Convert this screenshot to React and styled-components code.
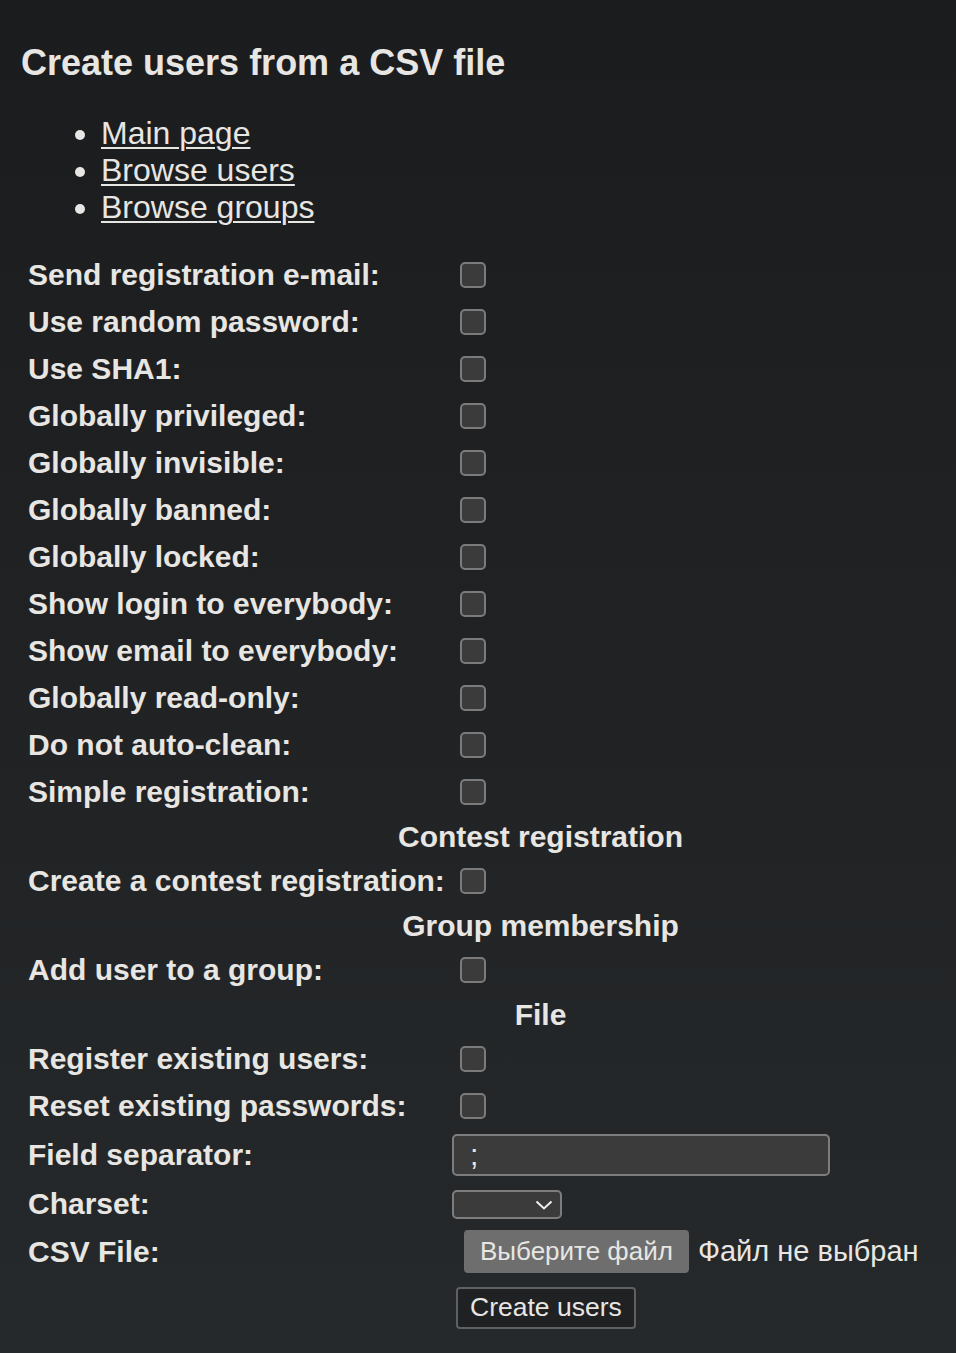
import React from "react";
import styled, { createGlobalStyle } from "styled-components";

const Global = createGlobalStyle`
  html, body { margin: 0; padding: 0; }
  body {
    background: #1b1c1e;
    font-family: "Liberation Sans", Arial, sans-serif;
    color: #e8e6e3;
  }
`;

const Page = styled.div`
  min-height: 100vh;
  overflow: hidden;
  box-sizing: border-box;
  padding: 42px 0 0 21px;
  background: linear-gradient(to bottom, #1b1c1e 0%, #202224 50%, #26292b 100%);
`;

const Title = styled.h1`
  margin: 0;
  font-size: 36px;
  line-height: 42px;
  font-weight: bold;
  white-space: nowrap;
`;

const NavList = styled.ul`
  margin: 31px 0 0 0;
  padding: 0 0 0 80px;
  font-size: 32px;
  line-height: 37px;
  list-style: disc;
`;

const NavLink = styled.a`
  color: #e8e6e3;
  text-decoration: underline;
  text-decoration-thickness: 2px;
  text-underline-offset: 3px;
`;

const Form = styled.form`
  margin: 25.5px 0 0 7px;
  width: 1025px;
`;

const Row = styled.div`
  display: grid;
  grid-template-columns: 424px 601px;
  height: ${(p) => p.$h || 47}px;
  align-items: center;
`;

const Label = styled.label`
  font-size: 30px;
  font-weight: bold;
  white-space: nowrap;
  line-height: 34px;
`;

const Cell = styled.div`
  display: flex;
  align-items: center;
`;

const SectionHeader = styled.div`
  height: 42px;
  display: flex;
  align-items: center;
  justify-content: center;
  font-size: 30px;
  font-weight: bold;
  line-height: 34px;
`;

const Check = styled.input.attrs({ type: "checkbox" })`
  appearance: none;
  margin: 0 0 0 8px;
  width: 26px;
  height: 26px;
  box-sizing: border-box;
  border: 2px solid #7b7b7b;
  border-radius: 5px;
  background: #3b3b3b;
`;

const TextInput = styled.input`
  box-sizing: border-box;
  width: 378px;
  height: 42px;
  margin: 0;
  padding: 0 14px 0 16px;
  border: 2px solid #7d7d7d;
  border-radius: 5px;
  background: #3b3b3b;
  color: #e8e6e3;
  font-family: "Liberation Sans", Arial, sans-serif;
  font-size: 30px;
  outline: none;
`;

const SelectWrap = styled.div`
  position: relative;
  width: 110px;
  height: 29px;
`;

const Select = styled.select`
  appearance: none;
  box-sizing: border-box;
  width: 110px;
  height: 29px;
  margin: 0;
  border: 2px solid #7d7d7d;
  border-radius: 5px;
  background: #3b3b3b;
  color: #e8e6e3;
  font-family: "Liberation Sans", Arial, sans-serif;
  font-size: 20px;
`;

const Chevron = styled.svg`
  position: absolute;
  right: 9px;
  top: 10px;
  pointer-events: none;
`;

const FileButton = styled.button`
  box-sizing: border-box;
  margin: 0 0 0 12px;
  height: 43px;
  padding: 0 16px;
  border: none;
  border-radius: 4px;
  background: #6e6e6e;
  color: #e8e6e3;
  font-family: "Liberation Sans", Arial, sans-serif;
  font-size: 26px;
  white-space: nowrap;
`;

const FileStatus = styled.span`
  margin-left: 9px;
  font-size: 29px;
  white-space: nowrap;
`;

const SubmitButton = styled.button`
  box-sizing: border-box;
  margin: 0 0 0 4px;
  height: 42px;
  padding: 0 12px;
  border: 2px solid #5e6063;
  border-radius: 4px;
  background: #1f2123;
  color: #e8e6e3;
  font-family: "Liberation Sans", Arial, sans-serif;
  font-size: 26.5px;
  white-space: nowrap;
`;

const generalOptions = [
  "Send registration e-mail:",
  "Use random password:",
  "Use SHA1:",
  "Globally privileged:",
  "Globally invisible:",
  "Globally banned:",
  "Globally locked:",
  "Show login to everybody:",
  "Show email to everybody:",
  "Globally read-only:",
  "Do not auto-clean:",
  "Simple registration:",
];

function CheckRow({ label }) {
  return (
    <Row>
      <Label>{label}</Label>
      <Cell>
        <Check />
      </Cell>
    </Row>
  );
}

export default function App() {
  return (
    <>
      <Global />
      <Page>
        <Title>Create users from a CSV file</Title>
        <NavList>
          <li><NavLink href="#">Main page</NavLink></li>
          <li><NavLink href="#">Browse users</NavLink></li>
          <li><NavLink href="#">Browse groups</NavLink></li>
        </NavList>
        <Form onSubmit={(e) => e.preventDefault()}>
          {generalOptions.map((l) => (
            <CheckRow key={l} label={l} />
          ))}
          <SectionHeader>Contest registration</SectionHeader>
          <CheckRow label="Create a contest registration:" />
          <SectionHeader>Group membership</SectionHeader>
          <CheckRow label="Add user to a group:" />
          <SectionHeader>File</SectionHeader>
          <CheckRow label="Register existing users:" />
          <CheckRow label="Reset existing passwords:" />
          <Row $h={51}>
            <Label>Field separator:</Label>
            <Cell>
              <TextInput defaultValue=";" />
            </Cell>
          </Row>
          <Row $h={47}>
            <Label>Charset:</Label>
            <Cell>
              <SelectWrap>
                <Select defaultValue="">
                  <option value=""></option>
                  <option value="utf-8">UTF-8</option>
                </Select>
                <Chevron width="18" height="10" viewBox="0 0 18 10">
                  <path d="M1.5 1.5 L9 8.5 L16.5 1.5" fill="none" stroke="#f0f0f0" strokeWidth="2" />
                </Chevron>
              </SelectWrap>
            </Cell>
          </Row>
          <Row $h={48}>
            <Label>CSV File:</Label>
            <Cell>
              <FileButton type="button">Выберите файл</FileButton>
              <FileStatus>Файл не выбран</FileStatus>
            </Cell>
          </Row>
          <Row $h={64}>
            <span />
            <Cell>
              <SubmitButton type="submit">Create users</SubmitButton>
            </Cell>
          </Row>
        </Form>
      </Page>
    </>
  );
}
